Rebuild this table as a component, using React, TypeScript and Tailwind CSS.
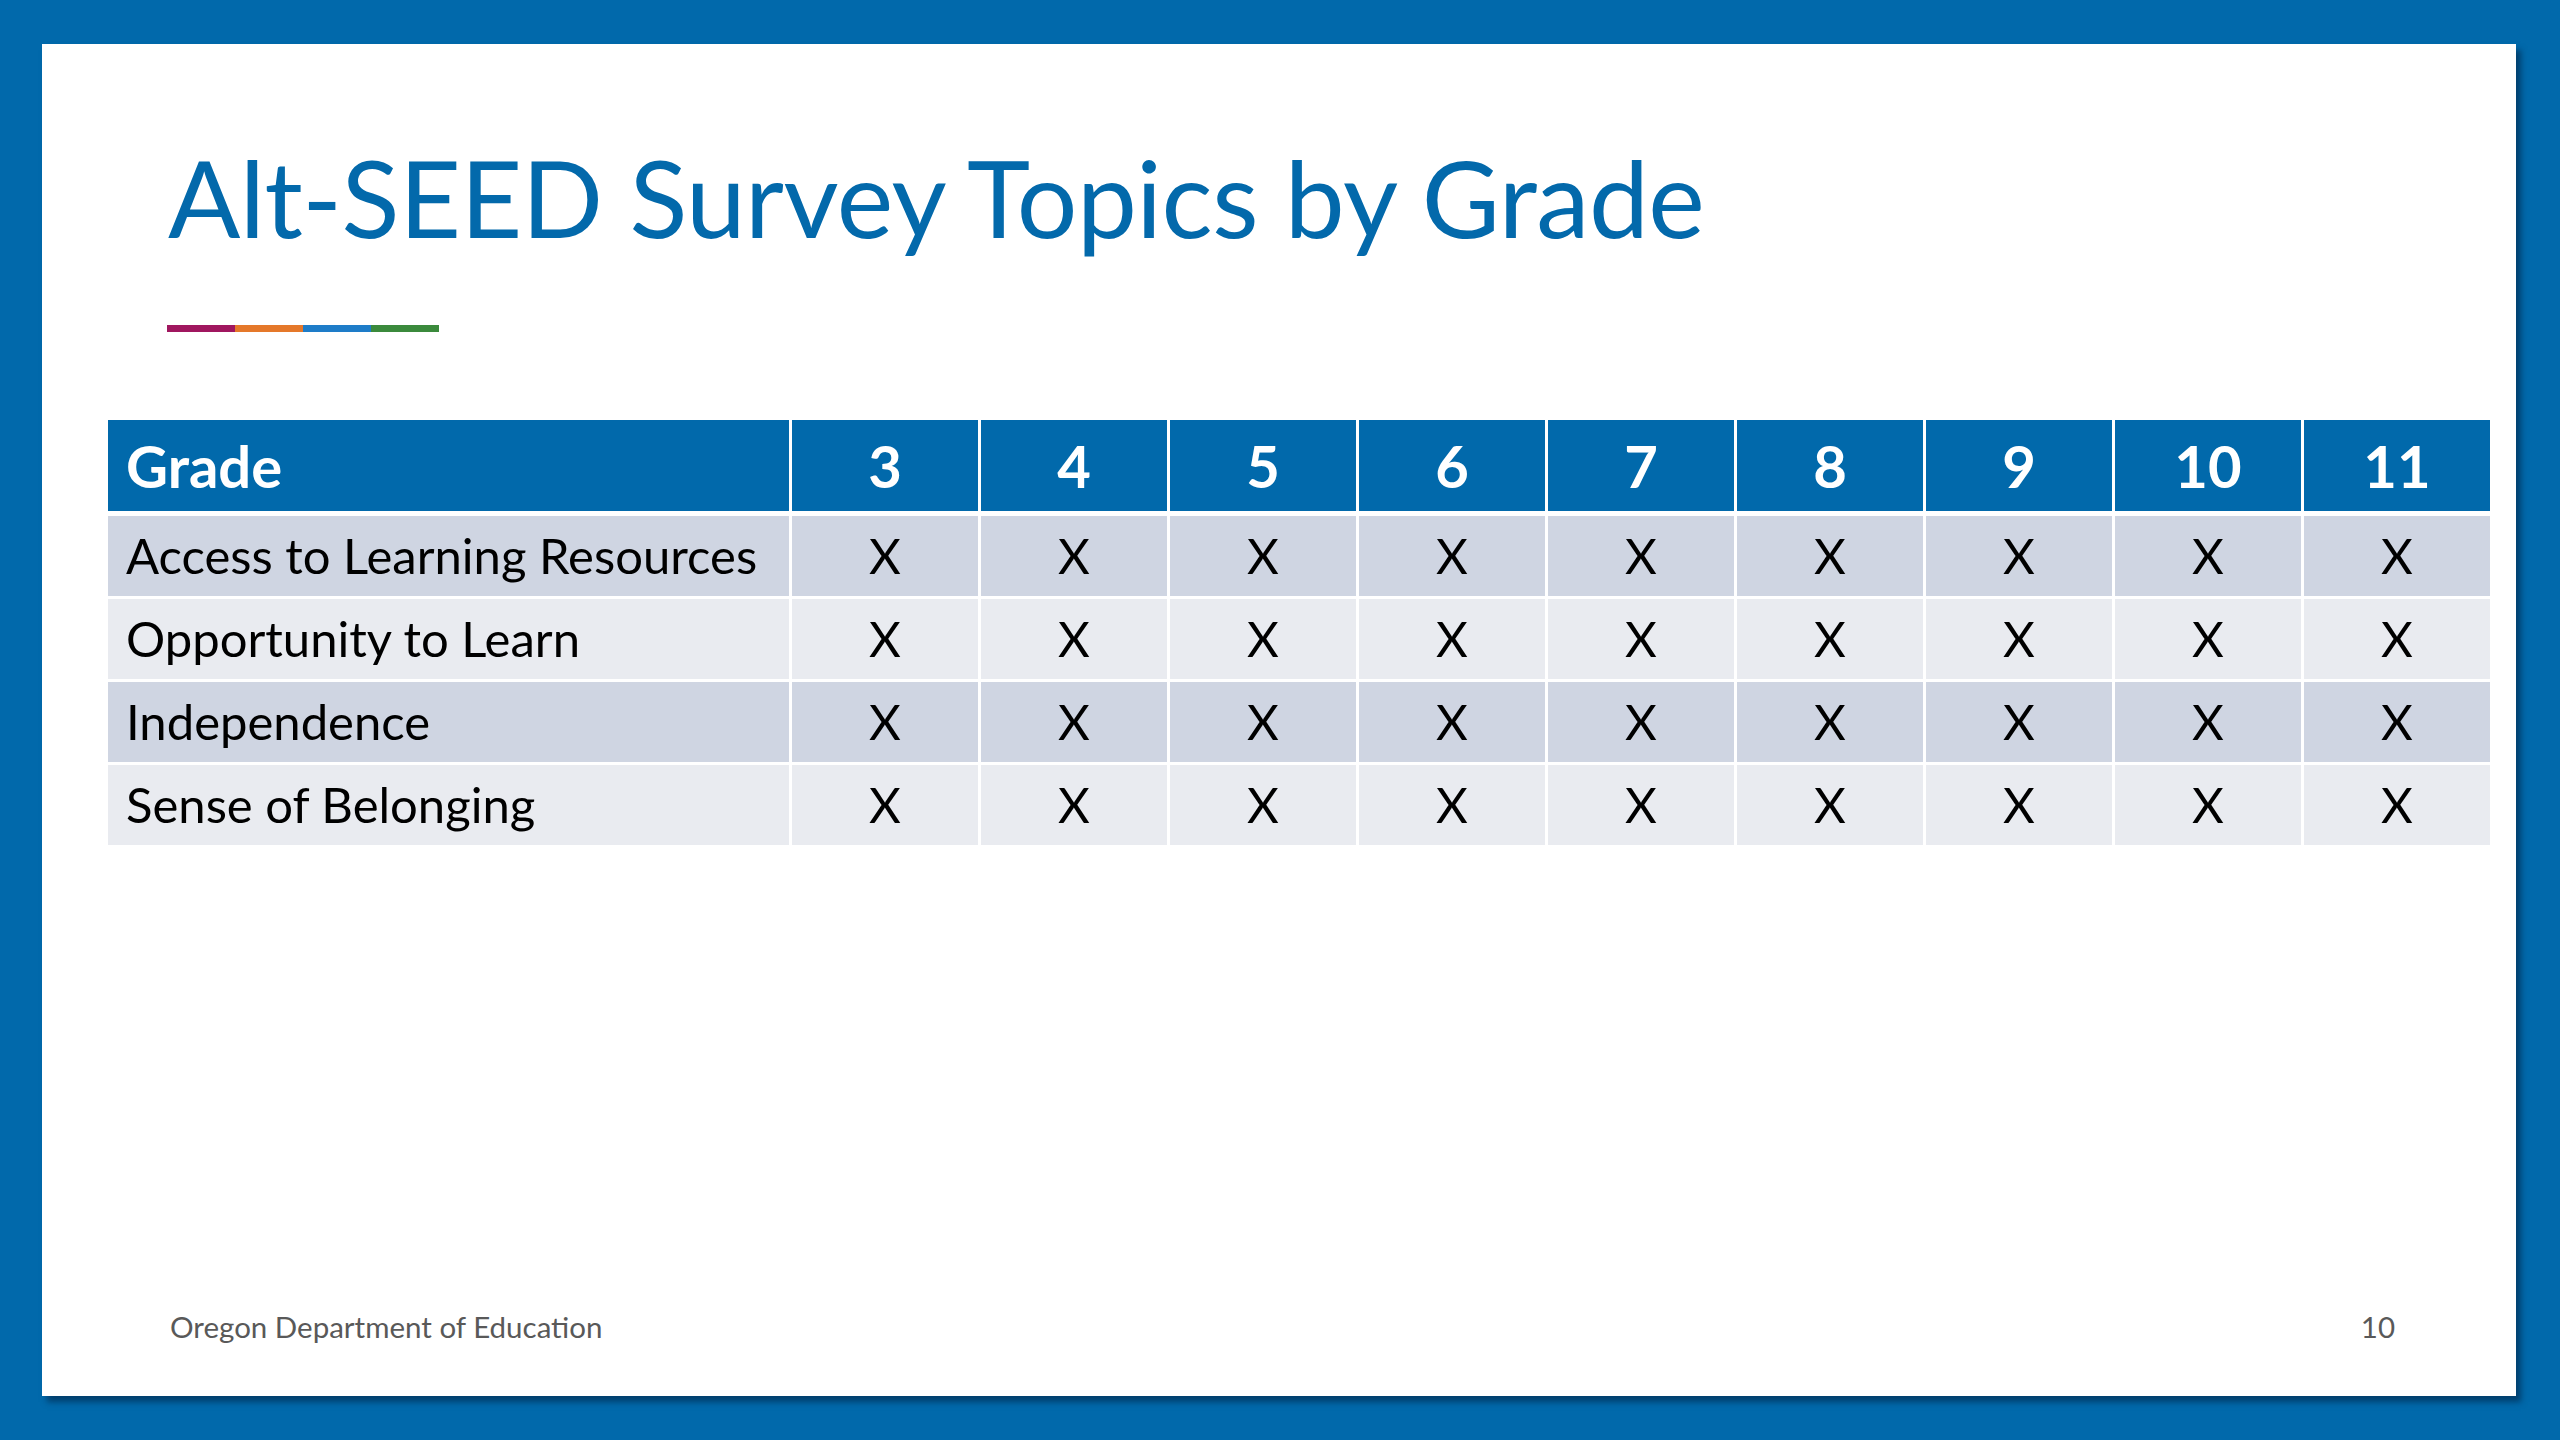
const grades = ['3', '4', '5', '6', '7', '8', '9', '10', '11']

const topics = [
  'Access to Learning Resources',
  'Opportunity to Learn',
  'Independence',
  'Sense of Belonging',
]

export default function App() {
  return (
    <div
      className="w-[2560px] h-[1440px] bg-[#0169ab] pt-[44px] pl-[42px]"
      style={{ fontFamily: 'Lato, "Open Sans", sans-serif' }}
    >
      <div className="relative w-[2474px] h-[1352px] bg-white shadow-[5px_6px_6px_rgba(0,30,60,0.55)] flex flex-col">
        {/* Titre */}
        <h1 className="pl-[126px] pt-[88px] text-[107px] leading-[130px] text-[#0369ab] tracking-[-0.5px]">
          Alt-SEED Survey Topics by Grade
        </h1>

        {/* Barre de couleurs */}
        <div className="ml-[125px] mt-[63px] flex h-[7px] w-[272px]">
          <div className="flex-1 bg-[#a0175f]" />
          <div className="flex-1 bg-[#e5782a]" />
          <div className="flex-1 bg-[#1e7cc8]" />
          <div className="flex-1 bg-[#3b8a3c]" />
        </div>

        {/* Tableau */}
        <div className="ml-[66px] mt-[88px] w-[2382px] flex flex-col">
          <div className="grid grid-cols-[681px_repeat(9,1fr)] gap-x-[3px] h-[91px] bg-white">
            <div className="bg-[#0169ab] flex items-center pl-[18px] text-white font-bold text-[58px]">
              Grade
            </div>
            {grades.map((g) => (
              <div
                key={g}
                className="bg-[#0169ab] flex items-center justify-center text-white font-bold text-[58px]"
              >
                {g}
              </div>
            ))}
          </div>

          <div className="mt-[5px] flex flex-col gap-y-[3px]">
            {topics.map((t, i) => (
              <div
                key={t}
                className="grid grid-cols-[681px_repeat(9,1fr)] gap-x-[3px] h-[80px]"
              >
                <div
                  className={`flex items-center pl-[18px] text-black text-[49px] ${
                    i % 2 === 0 ? 'bg-[#cfd5e2]' : 'bg-[#e9ebf0]'
                  }`}
                >
                  {t}
                </div>
                {grades.map((g) => (
                  <div
                    key={g}
                    className={`flex items-center justify-center text-black text-[49px] ${
                      i % 2 === 0 ? 'bg-[#cfd5e2]' : 'bg-[#e9ebf0]'
                    }`}
                  >
                    X
                  </div>
                ))}
              </div>
            ))}
          </div>
        </div>

        {/* Pied de page */}
        <div className="mt-auto mb-[47px] flex items-center justify-between pl-[128px] pr-[121px] text-[29.5px] text-[#595959]">
          <span>Oregon Department of Education</span>
          <span>10</span>
        </div>
      </div>
    </div>
  )
}
